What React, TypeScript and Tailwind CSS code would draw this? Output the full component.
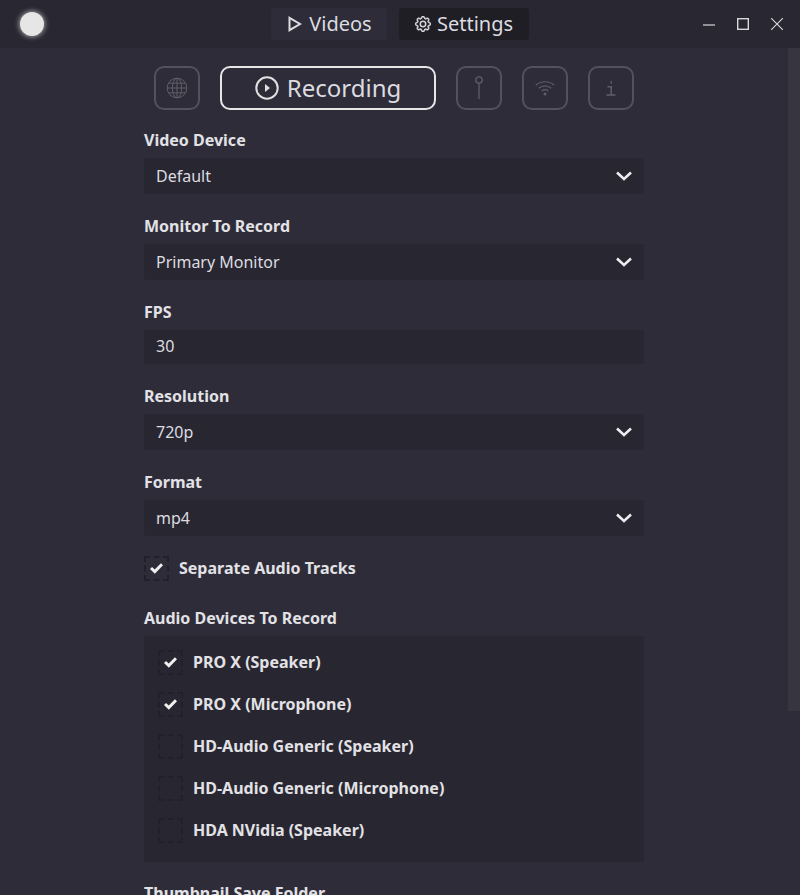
import React from 'react';
import { BsGear } from 'react-icons/bs';

const audioDevices = [
  { name: 'PRO X (Speaker)', checked: true },
  { name: 'PRO X (Microphone)', checked: true },
  { name: 'HD-Audio Generic (Speaker)', checked: false },
  { name: 'HD-Audio Generic (Microphone)', checked: false },
  { name: 'HDA NVidia (Speaker)', checked: false },
];

const Label = ({ text }: { text: string }) => (
  <div className="h-[22px] mb-[7px] text-[16px] leading-[22px] font-bold text-[#e2e2e6]">{text}</div>
);

const Chevron = () => (
  <svg width="16" height="10" viewBox="0 0 16 10" fill="none" stroke="#ececee" strokeWidth="2.6">
    <path d="M1 1.5 L8 8 L15 1.5" />
  </svg>
);

const Select = ({ label, value, last }: { label: string; value: string; last?: boolean }) => (
  <div className={last ? 'mb-5' : 'mb-[21px]'}>
    <Label text={label} />
    <div className="h-9 flex items-center justify-between pl-3 pr-3 rounded-[3px] bg-[#282630] text-[16px] text-[#dcdce0]">
      <span>{value}</span>
      <Chevron />
    </div>
  </div>
);

const Check = () => (
  <svg width="13" height="11" viewBox="0 0 13 11" fill="none" stroke="#f0f0f0" strokeWidth="3">
    <path d="M1 5 L4.8 8.6 L12 1.2" />
  </svg>
);

const CheckBox = ({ checked }: { checked: boolean }) => (
  <div className="w-[25px] h-[25px] shrink-0 flex items-center justify-center border-2 border-dashed border-[#22202a]">
    {checked && <Check />}
  </div>
);

const CheckRow = ({ text, checked }: { text: string; checked: boolean }) => (
  <div className="h-[25px] flex items-center gap-[10px]">
    <CheckBox checked={checked} />
    <span className="h-[25px] text-[16px] leading-[25px] font-bold text-[#e2e2e6]">{text}</span>
  </div>
);

const IconTab = ({ children }: { children: React.ReactNode }) => (
  <div className="w-[46px] h-11 flex items-center justify-center rounded-[10px] border-2 border-[#53525c] text-[#5f5e68]">
    {children}
  </div>
);

export default function App() {
  return (
    <div className="relative h-[895px] w-[800px] overflow-hidden bg-[#2e2c38] font-['Noto_Sans',sans-serif]">
      <header className="relative h-12 flex items-center justify-center gap-3 bg-[#292731]">
        <div className="absolute left-[20px] top-3 w-6 h-6 rounded-full bg-[#e6e6e6] shadow-[0_0_5px_1px_rgba(255,255,255,0.55)]" />
        <div className="w-[116px] h-8 flex items-center justify-center gap-[7px] pl-[2px] rounded-[3px] bg-[#2e2c38] text-[20px] text-[#dcdce0]">
          <svg width="14" height="16" viewBox="0 0 14 16" fill="none" stroke="#dcdce0" strokeWidth="2">
            <path d="M1.5 1.8 L12 8 L1.5 14.2 Z" />
          </svg>
          Videos
        </div>
        <div className="w-[130px] h-8 flex items-center justify-center gap-[6px] rounded-[3px] bg-[#1f1e25] text-[20px] text-[#dcdce0]">
          <BsGear size={16} stroke="currentColor" strokeWidth={0.5} />
          Settings
        </div>
        <div className="absolute right-[17px] top-[18px] flex items-center gap-[22px] text-[#d8d8dc]">
          <svg width="12" height="12" viewBox="0 0 12 12" stroke="currentColor" strokeWidth="1.2">
            <path d="M0 7 H12" />
          </svg>
          <svg width="12" height="12" viewBox="0 0 12 12" fill="none" stroke="currentColor" strokeWidth="1.4">
            <rect x="0.7" y="0.7" width="10.6" height="10.6" />
          </svg>
          <svg width="12" height="12" viewBox="0 0 12 12" stroke="currentColor" strokeWidth="1.1">
            <path d="M0 0 L12 12 M12 0 L0 12" />
          </svg>
        </div>
      </header>

      <div className="absolute right-0 top-12 w-3 h-[663px] bg-[#363540]" />

      <main className="w-[788px] flex flex-col items-center">
        <nav className="mt-[18px] mb-[19px] flex items-center gap-5">
          <IconTab>
            <svg width="22" height="22" viewBox="0 0 22 22" fill="none" stroke="currentColor" strokeWidth="1">
              <circle cx="11" cy="11" r="9.8" />
              <ellipse cx="11" cy="11" rx="4.6" ry="9.8" />
              <path d="M11 1.2 V20.8 M1.2 11 H20.8 M2.6 6.2 H19.4 M2.6 15.8 H19.4" />
            </svg>
          </IconTab>
          <div className="w-[216px] h-11 flex items-center justify-center gap-2 rounded-[10px] border-2 border-[#e6e6e6] text-[24px] text-[#dcdce0]">
            <svg width="24" height="24" viewBox="0 0 24 24" fill="none">
              <circle cx="12" cy="12" r="10.7" stroke="#e0e0e0" strokeWidth="2" />
              <path d="M10 8 L15 12 L10 16 Z" fill="#e0e0e0" />
            </svg>
            Recording
          </div>
          <IconTab>
            <svg width="12" height="24" viewBox="0 0 12 24" fill="none" stroke="currentColor" strokeWidth="1.3">
              <circle cx="6" cy="4" r="3.2" />
              <path d="M6 7.2 V23" />
            </svg>
          </IconTab>
          <IconTab>
            <svg width="20" height="16" viewBox="0 0 20 16" fill="none" stroke="currentColor" strokeWidth="1.2">
              <path d="M0.8 5.2 C5.8 0.6 14.2 0.6 19.2 5.2" />
              <path d="M3.8 8.2 C7.4 5 12.6 5 16.2 8.2" />
              <path d="M6.8 11 C8.8 9.4 11.2 9.4 13.2 11" />
              <circle cx="10" cy="14" r="1.5" fill="currentColor" stroke="none" />
            </svg>
          </IconTab>
          <IconTab>
            <svg width="10" height="15" viewBox="0 0 10 15" fill="none" stroke="currentColor" strokeWidth="1.5">
              <path d="M1.5 5.8 H5.2 V14 M0.5 14 H9.5" />
              <path d="M4.4 0.2 H6 V2.4 H4.4 Z" fill="currentColor" stroke="none" />
            </svg>
          </IconTab>
        </nav>

        <div className="w-[500px]">
          <Select label="Video Device" value="Default" />
          <Select label="Monitor To Record" value="Primary Monitor" />
          <div className="mb-[21px]">
            <Label text="FPS" />
            <div className="h-[34px] flex items-center pl-3 pb-[2px] rounded-[3px] bg-[#282630] text-[16px] text-[#dcdce0]">30</div>
          </div>
          <Select label="Resolution" value="720p" />
          <Select label="Format" value="mp4" last />

          <div className="mb-[26px]">
            <CheckRow text="Separate Audio Tracks" checked />
          </div>

          <Label text="Audio Devices To Record" />
          <div className="h-[226px] pt-[14px] pl-[14px] flex flex-col gap-[17px] rounded-[3px] bg-[#282630]">
            {audioDevices.map((device) => (
              <CheckRow key={device.name} text={device.name} checked={device.checked} />
            ))}
          </div>

          <div className="mt-[20px] h-[22px] text-[16px] leading-[22px] font-bold text-[#e2e2e6]">Thumbnail Save Folder</div>
        </div>
      </main>
    </div>
  );
}
